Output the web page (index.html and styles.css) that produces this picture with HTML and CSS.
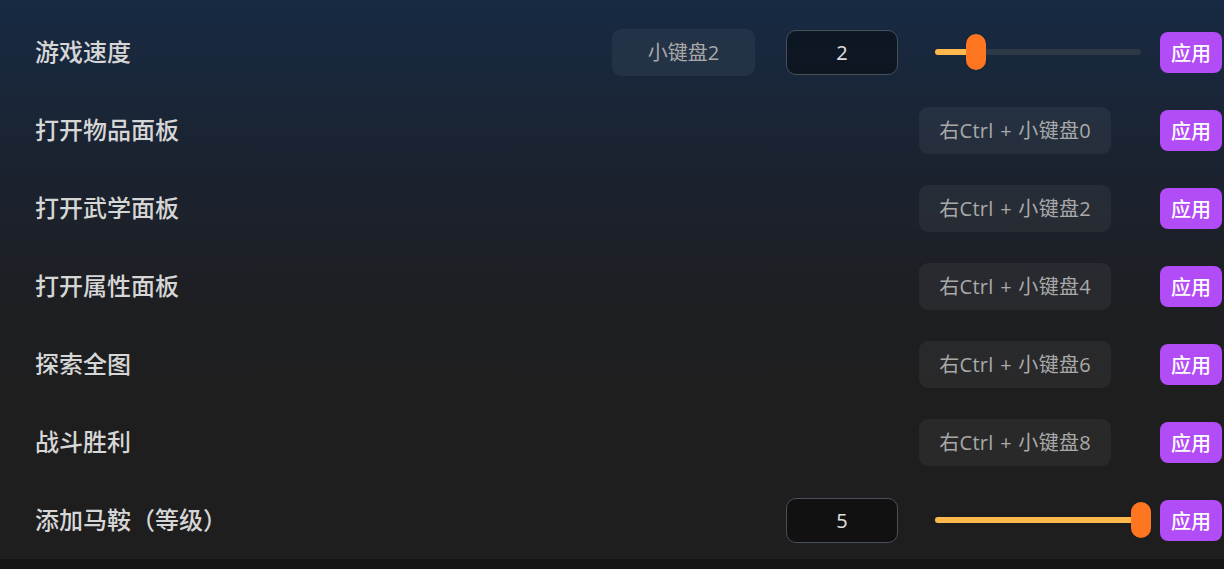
FILE: index.html
```html
<!DOCTYPE html>
<html lang="zh-CN">
<head>
    <meta charset="UTF-8">
    <meta name="viewport" content="width=device-width, initial-scale=1.0">
    <title>修改器设置</title>
    <link rel="stylesheet" href="styles.css">
</head>
<body>
    <div class="panel">
        <div class="row">
            <span class="label">游戏速度</span>
            <div class="controls">
                <span class="key key-single">小键盘2</span>
                <input class="num" type="text" value="2">
                <div class="slider">
                    <div class="fill" style="width: 20%"></div>
                    <span class="thumb" style="left: 20%"></span>
                </div>
                <button class="apply">应用</button>
            </div>
        </div>

        <div class="row">
            <span class="label">打开物品面板</span>
            <div class="controls">
                <span class="key">右Ctrl + 小键盘0</span>
                <button class="apply">应用</button>
            </div>
        </div>

        <div class="row">
            <span class="label">打开武学面板</span>
            <div class="controls">
                <span class="key">右Ctrl + 小键盘2</span>
                <button class="apply">应用</button>
            </div>
        </div>

        <div class="row">
            <span class="label">打开属性面板</span>
            <div class="controls">
                <span class="key">右Ctrl + 小键盘4</span>
                <button class="apply">应用</button>
            </div>
        </div>

        <div class="row">
            <span class="label">探索全图</span>
            <div class="controls">
                <span class="key">右Ctrl + 小键盘6</span>
                <button class="apply">应用</button>
            </div>
        </div>

        <div class="row">
            <span class="label">战斗胜利</span>
            <div class="controls">
                <span class="key">右Ctrl + 小键盘8</span>
                <button class="apply">应用</button>
            </div>
        </div>

        <div class="row">
            <span class="label">添加马鞍（等级）</span>
            <div class="controls">
                <input class="num" type="text" value="5">
                <div class="slider">
                    <div class="fill" style="width: 100%"></div>
                    <span class="thumb" style="left: 100%"></span>
                </div>
                <button class="apply">应用</button>
            </div>
        </div>
    </div>
    <div class="footer"></div>
</body>
</html>
```

FILE: styles.css
```css
* {
    margin: 0;
    padding: 0;
    box-sizing: border-box;
}

body {
    font-family: 'Noto Sans', 'Noto Sans CJK SC', sans-serif;
    background: #141414;
    height: 569px;
    overflow: hidden;
}

.panel {
    background: linear-gradient(180deg, #172a43 0%, #1b2331 28%, #1d1f24 50%, #1e1e1e 72%, #1e1e1e 100%);
    padding: 13px 2px 0 35px;
    height: 559px;
}

.row {
    display: flex;
    align-items: center;
    justify-content: space-between;
    height: 78px;
}

.label {
    font-family: 'Noto Sans CJK SC', sans-serif;
    font-size: 24px;
    font-weight: 500;
    color: #d6d6d6;
    padding-bottom: 4px;
}

.controls {
    display: flex;
    align-items: center;
}

.key {
    font-family: 'Open Sans', 'Noto Sans CJK SC', sans-serif;
    font-size: 20px;
    color: #a9a9a9;
    background: rgba(255, 255, 255, 0.05);
    border-radius: 9px;
    height: 47px;
    line-height: 47px;
    padding: 0 20px;
    margin-right: 49px;
    letter-spacing: 0.3px;
    word-spacing: 1px;
}

.key-single {
    width: 143px;
    padding: 0;
    text-align: center;
    margin-right: 31px;
    letter-spacing: 0;
}

.num {
    width: 112px;
    height: 45px;
    border: 1.5px solid #474f5a;
    border-radius: 10px;
    background: rgba(0, 0, 0, 0.42);
    color: #dcdcdc;
    font-family: 'Noto Sans', sans-serif;
    font-size: 20px;
    text-align: center;
    outline: none;
    margin-right: 37px;
}

.slider {
    position: relative;
    width: 206px;
    height: 6px;
    border-radius: 3px;
    background: #2e3946;
    margin-right: 19px;
}

.fill {
    height: 100%;
    border-radius: 3px;
    background: #ffb84d;
}

.thumb {
    position: absolute;
    top: 50%;
    width: 20px;
    height: 36px;
    margin-left: -10px;
    margin-top: -18px;
    border-radius: 10px;
    background: #ff7620;
}

.apply {
    width: 62px;
    height: 41px;
    border: none;
    border-radius: 8px;
    background: #b24cf6;
    color: #fff;
    font-family: 'Noto Sans CJK SC', sans-serif;
    font-size: 20px;
    font-weight: 500;
    cursor: pointer;
}

.footer {
    height: 10px;
    background: #141414;
}
```
